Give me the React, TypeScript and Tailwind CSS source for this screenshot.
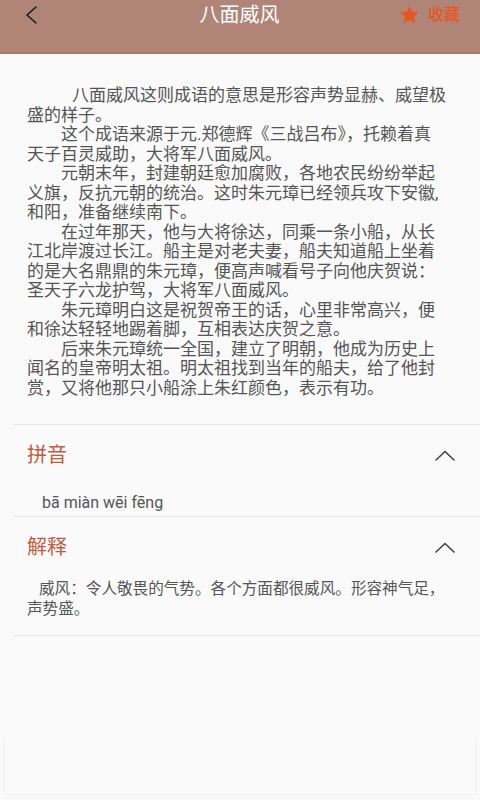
import React from "react";

const paragraphs = [
  "这个成语来源于元.郑德辉《三战吕布》，托赖着真天子百灵威助，大将军八面威风。",
  "元朝末年，封建朝廷愈加腐败，各地农民纷纷举起义旗，反抗元朝的统治。这时朱元璋已经领兵攻下安徽,和阳，准备继续南下。",
  "在过年那天，他与大将徐达，同乘一条小船，从长江北岸渡过长江。船主是对老夫妻，船夫知道船上坐着的是大名鼎鼎的朱元璋，便高声喊看号子向他庆贺说：圣天子六龙护驾，大将军八面威风。",
  "朱元璋明白这是祝贺帝王的话，心里非常高兴，便和徐达轻轻地踢着脚，互相表达庆贺之意。",
  "后来朱元璋统一全国，建立了明朝，他成为历史上闻名的皇帝明太祖。明太祖找到当年的船夫，给了他封赏，又将他那只小船涂上朱红颜色，表示有功。",
];

const ChevronUp = () => (
  <svg width="20" height="11" viewBox="0 0 20 11" fill="none">
    <polyline
      points="1,10 10,1.5 19,10"
      stroke="#444"
      strokeWidth="1.6"
      strokeLinecap="round"
      strokeLinejoin="round"
    />
  </svg>
);

const Section = ({
  title,
  children,
}: {
  title: string;
  children: React.ReactNode;
}) => (
  <div className="ml-[13px] border-t border-[#e8e8e8]">
    <div className="flex items-center justify-between pt-[20px] pl-[14px] pr-[25px]">
      <div className="text-[20px] leading-[20px] text-[#c25a3f]">{title}</div>
      <ChevronUp />
    </div>
    {children}
  </div>
);

export default function App() {
  return (
    <div
      className="flex min-h-screen flex-col bg-[#fafafa]"
      style={{ fontFamily: '"Roboto", "Noto Sans CJK SC", sans-serif' }}
    >
      {/* Header */}
      <div className="h-[54px] border-b-2 border-[#a87869] bg-[#b08477]">
        <div className="flex h-[30px] items-center pl-[24px] pr-[20px]">
          <svg width="14" height="20" viewBox="0 0 14 20" fill="none">
            <polyline
              points="12,2 3,10 12,18"
              stroke="#1a1a1a"
              strokeWidth="1.6"
              strokeLinecap="round"
              strokeLinejoin="round"
            />
          </svg>
          <div className="flex-1 pl-[42px] text-center text-[20px] leading-[30px] text-white">
            八面威风
          </div>
          <div className="flex items-center gap-[8px] text-[16px] font-medium text-[#e8561f]">
            <svg width="21" height="20" viewBox="0 0 24 23">
              <path
                d="M12 1l3.1 6.9 7.4.7-5.6 5 1.7 7.4L12 17.2 5.4 21l1.7-7.4-5.6-5 7.4-.7z"
                fill="#e8561f"
              />
            </svg>
            <span>收藏</span>
          </div>
        </div>
      </div>

      {/* Story */}
      <div className="w-[447px] pl-[27px] pt-[32px] pb-[26px] text-[17px] leading-[19.5px] text-[#555]">
        <p className="indent-[45px]">
          八面威风这则成语的意思是形容声势显赫、威望极盛的样子。
        </p>
        {paragraphs.map((p, i) => (
          <p key={i} className="indent-[34px]">
            {p}
          </p>
        ))}
      </div>

      <Section title="拼音">
        <div className="pt-[28px] pb-[3px] pl-[29px] text-[16px] leading-[20px] text-[#555]">
          bā miàn wēi fēng
        </div>
      </Section>

      <Section title="解释">
        <div className="pt-[22px] pr-[20px] pb-[16px] pl-[14px] text-[15.6px] leading-[20px] text-[#555]">
          <p className="indent-[12px]">
            威风：令人敬畏的气势。各个方面都很威风。形容神气足，声势盛。
          </p>
        </div>
      </Section>
      <div className="ml-[13px] border-t border-[#e8e8e8]" />

      <div className="flex-1" />
      <div className="mx-[3px] h-[58px] border-x border-b border-[#f3f3f3]" />
      <div className="h-[5px]" />
    </div>
  );
}
